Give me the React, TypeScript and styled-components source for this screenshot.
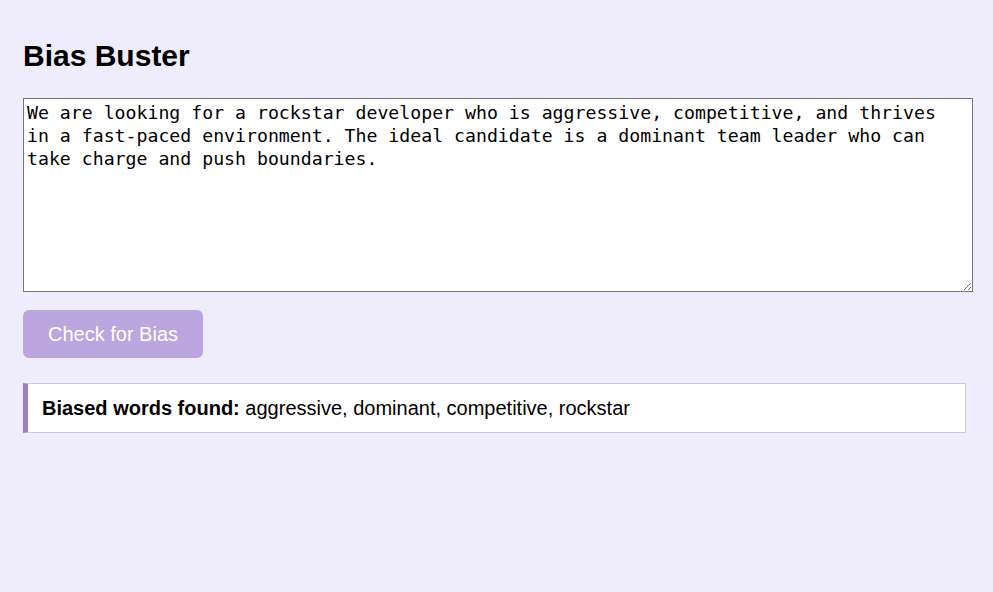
import React, { useState } from "react";
import styled, { createGlobalStyle } from "styled-components";

const Global = createGlobalStyle`
  html, body { margin: 0; padding: 0; background: #efecfb; }
  body { font-family: "Liberation Sans", Arial, sans-serif; color: #000; }
`;

const Page = styled.main`
  display: flex;
  flex-direction: column;
  align-items: flex-start;
  padding: 38px 20px 0 23px;
`;

const Title = styled.h1`
  margin: 0 0 24px;
  font-size: 30px;
  line-height: 36px;
  font-weight: 700;
`;

const TextArea = styled.textarea`
  box-sizing: border-box;
  width: 950px;
  height: 194px;
  margin: 0;
  padding: 2px 8px 2px 3px;
  border: 1px solid #767676;
  background: #fff;
  font-family: "DejaVu Sans Mono", monospace;
  font-size: 18.2px;
  line-height: 23px;
  color: #000;
  resize: vertical;
`;

const Button = styled.button`
  margin-top: 18px;
  width: 180px;
  height: 48px;
  border: none;
  border-radius: 6px;
  background: #bca6e0;
  color: #fff;
  font-family: "Liberation Sans", Arial, sans-serif;
  font-size: 20px;
  cursor: pointer;
`;

const Result = styled.div`
  box-sizing: border-box;
  margin-top: 25px;
  width: 943px;
  height: 50px;
  display: flex;
  align-items: center;
  padding: 0 14px;
  background: #fff;
  border: 1px solid #cccccc;
  border-left: 5px solid #9b7fc8;
  font-size: 20px;
`;

export default function App() {
  const [text, setText] = useState(
    "We are looking for a rockstar developer who is aggressive, competitive, and thrives in a fast-paced environment. The ideal candidate is a dominant team leader who can take charge and push boundaries."
  );
  return (
    <>
      <Global />
      <Page>
        <Title>Bias Buster</Title>
        <TextArea value={text} onChange={(e) => setText(e.target.value)} />
        <Button>Check for Bias</Button>
        <Result>
          <span>
            <strong>Biased words found:</strong> aggressive, dominant, competitive, rockstar
          </span>
        </Result>
      </Page>
    </>
  );
}
